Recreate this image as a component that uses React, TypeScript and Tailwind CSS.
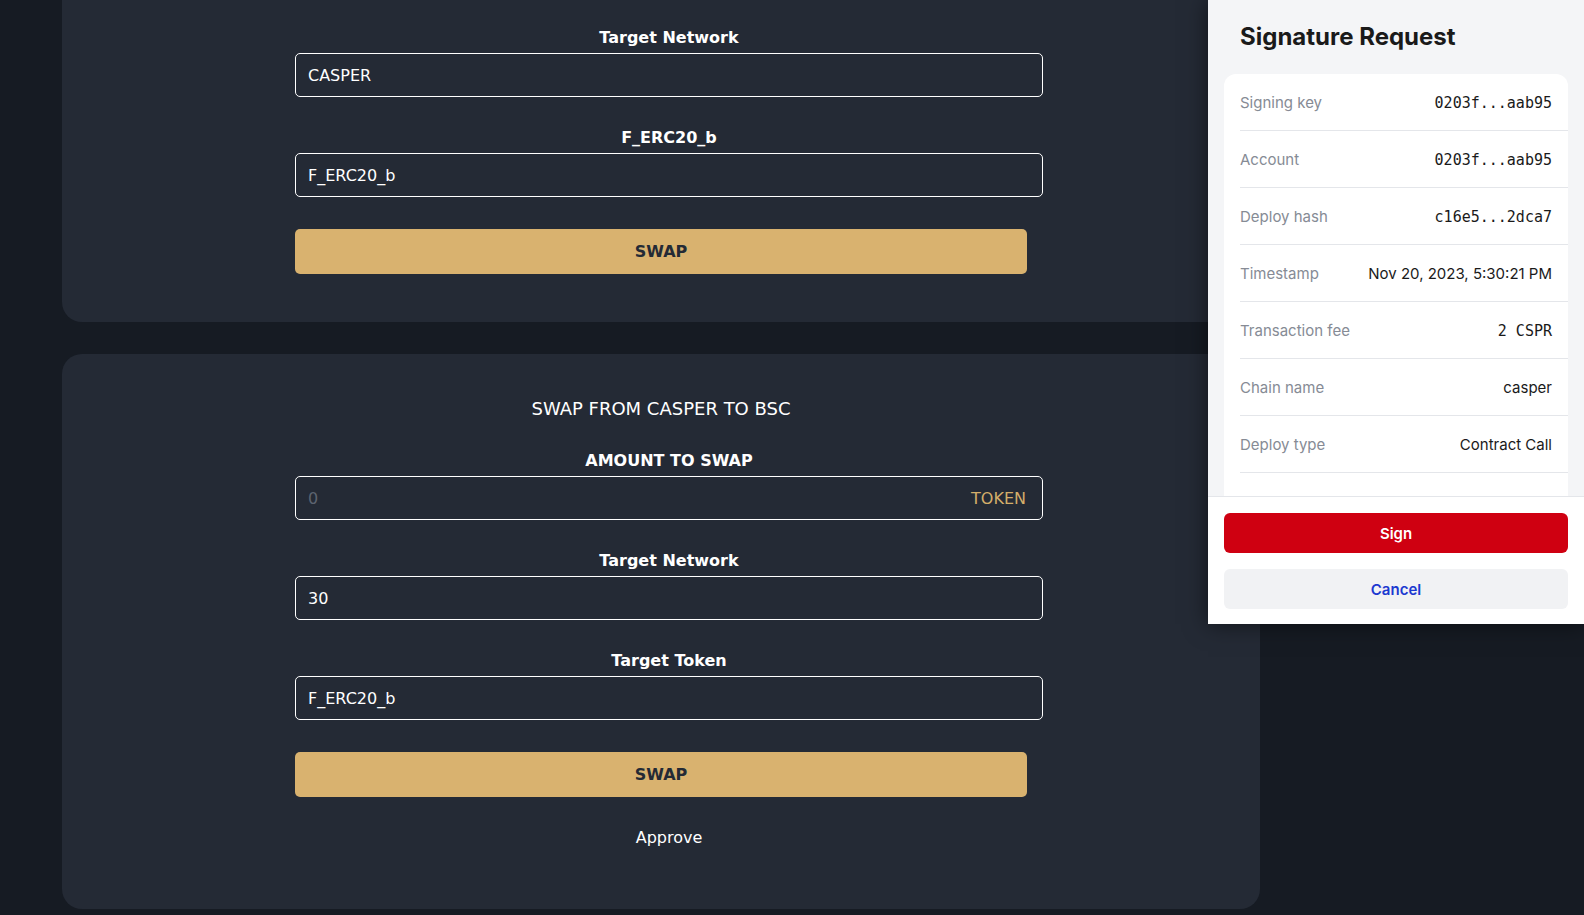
import React from 'react';

const rows: { label: string; value: string; mono?: boolean }[] = [
  { label: 'Signing key', value: '0203f...aab95', mono: true },
  { label: 'Account', value: '0203f...aab95', mono: true },
  { label: 'Deploy hash', value: 'c16e5...2dca7', mono: true },
  { label: 'Timestamp', value: 'Nov 20, 2023, 5:30:21 PM' },
  { label: 'Transaction fee', value: '2 CSPR', mono: true },
  { label: 'Chain name', value: 'casper' },
  { label: 'Deploy type', value: 'Contract Call' },
];

const Field: React.FC<{ label: string; value?: string; placeholder?: string; suffix?: string; first?: boolean }> = ({
  label,
  value,
  placeholder,
  suffix,
  first,
}) => (
  <div className={`w-[748px] ${first ? '' : 'mt-7'}`}>
    <div className="mb-[3px] pt-[1px] text-center text-base font-bold leading-6 text-white">{label}</div>
    <div className="flex h-11 items-center justify-between rounded-[5px] border border-white px-3 pt-[2px] text-base">
      {value ? <span className="text-white">{value}</span> : <span className="text-[#5d6470]">{placeholder}</span>}
      {suffix && <span className="pr-[4px] text-[#d4ae6a]">{suffix}</span>}
    </div>
  </div>
);

const SwapButton = () => (
  <button className="mt-8 h-[45px] w-[732px] rounded-[5px] bg-[#d9b26f] pt-[1px] text-base font-bold text-[#242a35]">
    SWAP
  </button>
);

export default function App() {
  return (
    <div className="relative h-[915px] w-full overflow-hidden bg-[#161b23] font-['DejaVu_Sans',sans-serif]">
      {/* Main column */}
      <div className="flex w-[1260px] flex-col gap-8 pl-[62px]">
        {/* Card 1 (scrolled, top cut off) */}
        <div className="flex flex-col items-center rounded-b-[20px] bg-[#242a35] pt-[25px] pb-12">
          <div className="w-[732px]">
            <Field label="Target Network" value="CASPER" first />
            <Field label="F_ERC20_b" value="F_ERC20_b" />
            <SwapButton />
          </div>
        </div>

        {/* Card 2 */}
        <div className="flex flex-col items-center rounded-[20px] bg-[#242a35] pt-10 pb-[59px]">
          <div className="mb-[25px] pt-[1px] text-[18px] leading-7 text-white">SWAP FROM CASPER TO BSC</div>
          <div className="w-[732px]">
            <Field label="AMOUNT TO SWAP" placeholder="0" suffix="TOKEN" first />
            <Field label="Target Network" value="30" />
            <Field label="Target Token" value="F_ERC20_b" />
            <SwapButton />
            <div className="mt-7 w-[748px] pt-[1px] text-center text-base leading-6 text-white">Approve</div>
          </div>
        </div>
      </div>

      {/* Signature request panel */}
      <div className="absolute top-0 right-0 flex h-[624px] w-[376px] flex-col bg-[#f4f5f7] font-['Inter',sans-serif] shadow-[0_0_22px_rgba(0,0,0,0.55)]">
        <h1 className="px-8 pt-[21px] text-2xl leading-8 font-bold text-[#1a1a1a]">Signature Request</h1>
        <div className="mx-4 mt-[21px] flex-1 overflow-hidden rounded-t-xl bg-white">
          {rows.map((r) => (
            <div
              key={r.label}
              className="ml-4 flex h-[57px] items-center justify-between border-b border-[#e4e6ea] pt-[2px] pr-4 text-[15px]"
            >
              <span className="text-[#868b95]">{r.label}</span>
              <span className={r.mono ? "font-['DejaVu_Sans_Mono',monospace] text-[#1a1a1a]" : 'text-[#1a1a1a]'}>
                {r.value}
              </span>
            </div>
          ))}
        </div>
        <div className="border-t border-[#e4e6ea] bg-white px-4 pt-4 pb-[15px]">
          <button className="h-10 w-full rounded-md bg-[#cf0011] pt-[3px] text-[15px] font-semibold text-white">Sign</button>
          <button className="mt-4 h-10 w-full rounded-md bg-[#f1f2f4] pt-[3px] text-[15px] font-semibold text-[#1b39d0]">
            Cancel
          </button>
        </div>
      </div>
    </div>
  );
}
